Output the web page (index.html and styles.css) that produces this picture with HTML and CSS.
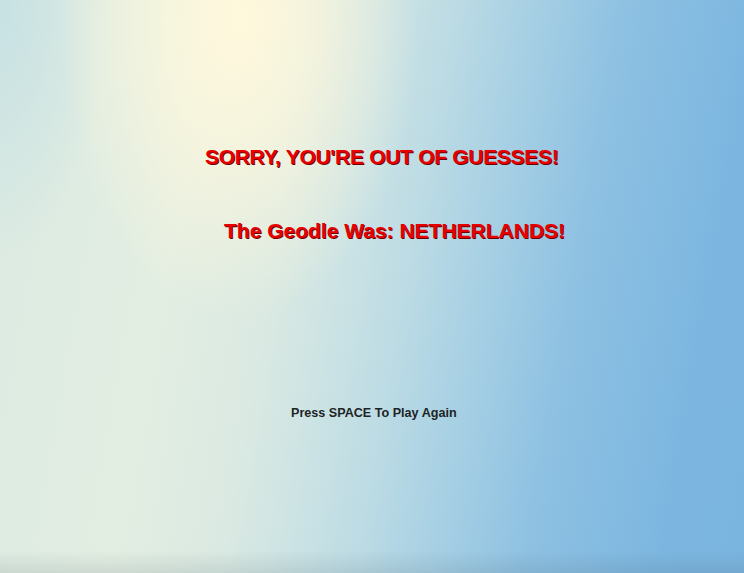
FILE: index.html
```html
<!DOCTYPE html>
<html lang="en">
<head>
    <meta charset="UTF-8">
    <meta name="viewport" content="width=device-width, initial-scale=1.0">
    <title>Geodle</title>
    <link rel="stylesheet" href="styles.css">
</head>
<body>
    <div class="screen">
        <div class="message lost">SORRY, YOU'RE OUT OF GUESSES!</div>
        <div class="message answer">The Geodle Was: NETHERLANDS!</div>
        <div class="hint">Press SPACE To Play Again</div>
    </div>
</body>
</html>
```

FILE: styles.css
```css
html,
body {
    margin: 0;
    height: 100%;
}

body {
    font-family: "Liberation Sans", Arial, sans-serif;
    background:
        linear-gradient(to bottom, rgba(0, 0, 0, 0) 96%, rgba(60, 80, 90, 0.12) 100%),
        radial-gradient(ellipse 180px 300px at 238px 20px, #fff8dc 0%, rgba(255, 248, 220, 0.7) 40%, rgba(255, 248, 220, 0) 100%),
        radial-gradient(ellipse 110px 260px at 0 0, rgba(196, 224, 228, 0.9) 0%, rgba(196, 224, 228, 0) 100%),
        linear-gradient(100deg, #dbeae2 0%, #e3eee2 25%, #dae9e2 38%, #cce3e4 46%, #bcdbe4 54%, #a9d1e4 62%, #8ec1e2 74%, #7cb6e0 90%, #7ab5e0 100%);
}

.screen {
    display: flex;
    flex-direction: column;
    height: 100%;
    padding-top: 144px;
    box-sizing: border-box;
}

.message {
    color: #e80000;
    font-size: 21px;
    font-weight: bold;
    text-shadow: 1px 1px 0 #700000;
    line-height: 26px;
}

.lost {
    margin-left: 205px;
    letter-spacing: -0.3px;
}

.answer {
    margin-left: 224px;
    margin-top: 48px;
}

.hint {
    margin-left: 291px;
    margin-top: 162px;
    font-size: 12.6px;
    font-weight: bold;
    color: #1e2426;
}
```
